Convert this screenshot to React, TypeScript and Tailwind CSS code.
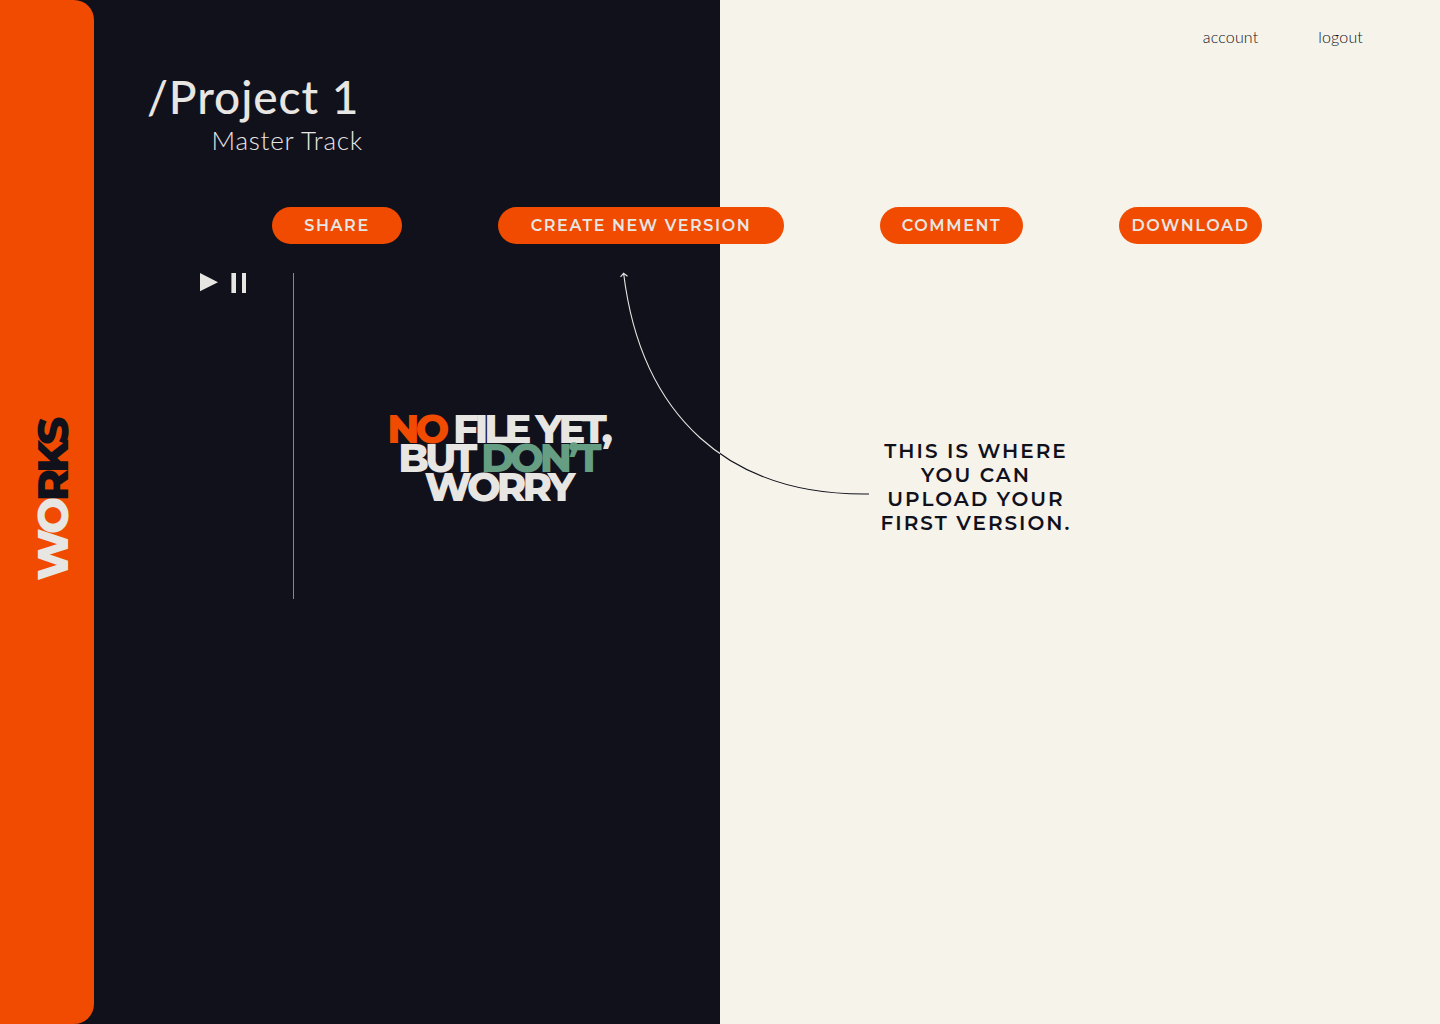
const actions = [
  { label: "SHARE", width: "w-[130px]" },
  { label: "CREATE NEW VERSION", width: "w-[286px]" },
  { label: "COMMENT", width: "w-[143px]" },
  { label: "DOWNLOAD", width: "w-[143px]" },
];

function Sidebar() {
  return (
    <aside className="flex w-[94px] shrink-0 items-center justify-center rounded-r-[20px] bg-[#f04b00] pl-[10px] pb-[22px]">
      <a
        href="#works"
        className="rotate-180 font-['Montserrat','Inter',sans-serif] text-[44px] leading-[52px] font-extrabold tracking-[-0.1em] text-[#e8e6e3] [writing-mode:vertical-rl]"
      >
        WO<span className="text-[#11111c]">RKS</span>
      </a>
    </aside>
  );
}

function Playback() {
  return (
    <div className="mt-px -ml-[72px] flex h-5 w-[46px] shrink-0 justify-between">
      <button type="button" aria-label="Play" className="h-5">
        <svg width="18" height="20" viewBox="0 0 18 20" fill="#e8e6e3">
          <path d="M0 0L18 9.2L0 18.2Z" />
        </svg>
      </button>
      <button type="button" aria-label="Pause" className="h-5">
        <svg width="15" height="20" viewBox="0 0 15 20" fill="#e8e6e3">
          <path d="M0.4 0H5V20H0.4ZM11 0H15V20H11Z" />
        </svg>
      </button>
    </div>
  );
}

function Arrow() {
  return (
    <svg
      width="250"
      height="224"
      viewBox="0 0 250 224"
      fill="none"
      className="ml-[11px] shrink-0"
      aria-hidden="true"
    >
      <defs>
        <linearGradient id="split" gradientUnits="userSpaceOnUse" x1="0" y1="0" x2="250" y2="0">
          <stop offset="0.4" stopColor="#e8e6e3" />
          <stop offset="0.4" stopColor="#11111c" />
        </linearGradient>
      </defs>
      <path
        d="M0.5 4.8L3.6 1.3L7.5 4.2M3.6 1.3C21 143.5 108 224 249 222"
        stroke="url(#split)"
        strokeWidth="1.1"
      />
    </svg>
  );
}

export default function App() {
  return (
    <div className="flex min-h-screen bg-[#11111c] bg-[linear-gradient(to_right,#11111c_50%,#f6f3ea_50%)] font-['Lato',sans-serif]">
      <Sidebar />
      <main className="min-w-0 flex-1">
        <nav className="flex justify-end gap-[60px] pt-[25px] pr-[77px] text-base leading-6 font-light tracking-[0.01em] text-[#11111c]">
          <a href="#account">account</a>
          <a href="#logout">logout</a>
        </nav>
        <header className="ml-[53px] flex w-[216px] flex-col pt-5 text-[#e8e6e3]">
          <h1 className="text-[46px] leading-[56px] font-medium whitespace-nowrap tracking-[0.02em]">
            /Project 1
          </h1>
          <p className="text-right text-[26px] leading-[30px] font-light whitespace-nowrap tracking-[0.03em]">
            Master Track
          </p>
        </header>
        <div className="mt-[52px] flex justify-center gap-24">
          {actions.map((action) => (
            <button
              key={action.label}
              type="button"
              className={`${action.width} h-[37px] shrink-0 rounded-full bg-[#f04b00] text-center font-['Montserrat','Inter',sans-serif] text-base font-semibold tracking-[0.1em] whitespace-nowrap text-[#e8e6e3]`}
            >
              {action.label}
            </button>
          ))}
        </div>
        <section className="mx-auto mt-7 flex w-[990px] items-start">
          <Playback />
          <div className="mt-px ml-[47px] h-[326px] w-px shrink-0 bg-[#86868b]" />
          <h2 className="mt-[142px] ml-[93px] w-[222px] shrink-0 text-center font-['Montserrat','Inter',sans-serif] text-[40px] leading-[29px] font-extrabold tracking-[-0.1em] whitespace-nowrap text-[#e8e6e3]">
            <span className="text-[#f04b00]">NO</span> FILE YET,
            <br />
            BUT <span className="text-[#659e82]">DON’T</span>
            <br />
            WORRY
          </h2>
          <Arrow />
          <p className="mt-[167px] ml-2 w-[196px] shrink-0 text-center font-['Montserrat','Inter',sans-serif] text-xl leading-[normal] font-semibold tracking-[0.1em] whitespace-nowrap text-[#11111c]">
            THIS IS WHERE
            <br />
            YOU CAN
            <br />
            UPLOAD YOUR
            <br />
            FIRST VERSION.
          </p>
        </section>
      </main>
    </div>
  );
}
